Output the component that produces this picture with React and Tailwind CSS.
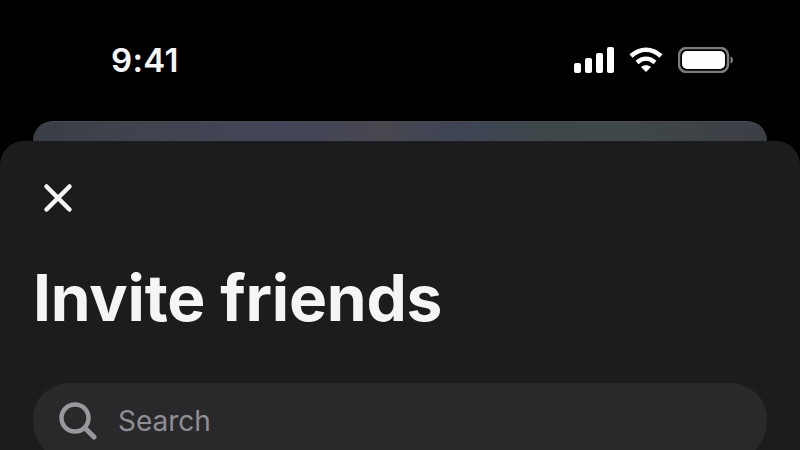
const CloseIcon = () => (
  <svg className="w-[30px] h-[30px] ml-[10px]" viewBox="0 0 30 30" fill="none" stroke="#f5f5f5" strokeWidth="4.5" strokeLinecap="round">
    <path d="M3.500 3.500l23 23M26.500 3.500l-23 23" />
  </svg>
);

const SearchIcon = () => (
  <svg className="w-[38px] h-[38px]" viewBox="0 0 38 38" fill="none" stroke="#98989d" strokeWidth="4.5" strokeLinecap="round">
    <circle cx="16" cy="16" r="13.500" />
    <path d="M26 26l9 9" strokeWidth="5" />
  </svg>
);

const StatusIcons = () => (
  <div className="flex items-center gap-[15px]">
    <svg className="w-[40px] h-[26px]" viewBox="0 0 40 26" fill="#fff">
      <rect x="0" y="16" width="7" height="10" rx="2" />
      <rect x="11" y="11" width="7" height="15" rx="2" />
      <rect x="22" y="6" width="7" height="20" rx="2" />
      <rect x="33" y="0" width="7" height="26" rx="2" />
    </svg>
    <svg className="w-[34px] h-[26px]" viewBox="0 0 34 26" fill="none" stroke="#fff" strokeWidth="4.500">
      <path d="M2 9c9-8.500 21-8.500 30 0" />
      <path d="M8 15.500c5.500-5 12.500-5 18 0" />
      <path d="M17 25l-5-5c3-2.500 7-2.500 10 0z" fill="#fff" stroke="none" />
    </svg>
    <svg className="w-[56px] h-[26px]" viewBox="0 0 56 26" fill="none">
      <rect x="1" y="1" width="49" height="24" rx="7.500" stroke="#7c7c7c" strokeWidth="2.500" />
      <rect x="4" y="4" width="43" height="18" rx="5" fill="#fff" />
      <path d="M52.500 9.500c2 .5 2.500 2 2.500 3.500s-.5 3-2.500 3.500z" fill="#7c7c7c" />
    </svg>
  </div>
);

const App = () => {
  return (
    <div className="w-[800px] h-[450px] overflow-hidden bg-black font-['Inter',sans-serif]">
      {/* Status bar */}
      <div className="h-[121px] flex items-start justify-between pl-[111px] pr-[66px] pt-[40px]">
        <span className="text-[33px] leading-[40px] font-semibold tracking-[0.3px] text-[#f5f5f5]">9:41</span>
        <div className="pt-[7px]">
          <StatusIcons />
        </div>
      </div>

      {/* Card peeking out behind the sheet */}
      <div className="mx-[33px] h-[20px] rounded-t-[20px] border-t border-[#494b4f] bg-[linear-gradient(90deg,#3a3e46_0%,#3f444e_15%,#424558_35%,#47474f_48%,#3e4456_58%,#3d4749_70%,#3f4749_82%,#3c3e46_100%)]" />

      {/* Sheet */}
      <div className="h-[350px] rounded-t-[24px] bg-[#1c1c1e] px-[33px] pt-[42px]">
        <CloseIcon />
        <h1 className="mt-[43px] text-[64px] leading-[84px] font-bold tracking-[-0.2px] text-[#f5f5f5]">Invite friends</h1>
        <div className="mt-[43px] h-[76px] rounded-[36px] bg-[#29292b] flex items-center gap-[21px] pl-[26px]">
          <SearchIcon />
          <span className="text-[28px] text-[#8e8e93]">Search</span>
        </div>
      </div>
    </div>
  );
};

export default App;
